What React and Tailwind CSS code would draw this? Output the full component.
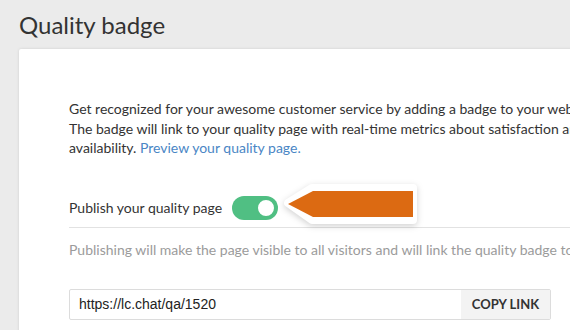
export default function App() {
  return (
    <div className="w-[570px] h-[330px] overflow-hidden bg-[#ebebeb] font-['Lato',sans-serif] text-[#333]">
      <h1 className="pl-[19px] pt-[10px] text-[24px] leading-[29px] font-normal text-[#333]">Quality badge</h1>

      <div className="ml-[19px] mt-[10px] w-[620px] h-[300px] bg-white rounded-[2px] shadow-[0_0_3px_rgba(0,0,0,0.12)] pl-[50px] pt-[50px]">
        <p className="text-[14px] leading-[19.6px] text-[#333] whitespace-nowrap">
          Get recognized for your awesome customer service by adding a badge to your website.
          <br />
          The badge will link to your quality page with real-time metrics about satisfaction and
          <br />
          availability. <a className="text-[#4a86c5]">Preview your quality page.</a>
        </p>

        <div className="relative mt-[38px] flex items-center h-[24px]">
          <span className="text-[14px] text-[#333]">Publish your quality page</span>
          <div className="ml-[10px] w-[46px] h-[24px] rounded-full bg-[#50bf83] flex items-center justify-end pr-[2px]">
            <div className="w-[20px] h-[20px] rounded-full bg-white border-2 border-[#50bf83]" />
          </div>

          {/* callout arrow */}
          <svg
            className="absolute left-[211px] top-[-12px] drop-shadow-[0_2px_3px_rgba(0,0,0,0.18)]"
            width="146"
            height="46"
            viewBox="0 0 146 46"
          >
            <polygon
              points="8,19 32,4 133,4 133,36 32,36"
              fill="#fff"
              stroke="#fff"
              strokeWidth="8"
              strokeLinejoin="round"
            />
            <polygon points="8,20 33,7 133,7 133,33 33,33" fill="#dc6a12" />
          </svg>
        </div>

        <div className="mt-[7px] h-px bg-[#e2e2e2]" />

        <p className="mt-[12px] text-[14px] leading-[20px] text-[#9b9b9b] whitespace-nowrap">
          Publishing will make the page visible to all visitors and will link the quality badge to your website.
        </p>

        <div className="mt-[29px] w-[482px] h-[31px] flex border border-[#dcdcdc] rounded-[2px] overflow-hidden">
          <div className="flex-1 flex items-center pl-[9px] font-['Liberation_Sans',Arial,sans-serif] text-[14px] text-[#222]">
            https://lc.chat/qa/1520
          </div>
          <div className="w-[89px] flex items-center justify-center bg-[#f3f3f3] text-[13px] font-bold text-[#333]">
            COPY LINK
          </div>
        </div>
      </div>
    </div>
  );
}
